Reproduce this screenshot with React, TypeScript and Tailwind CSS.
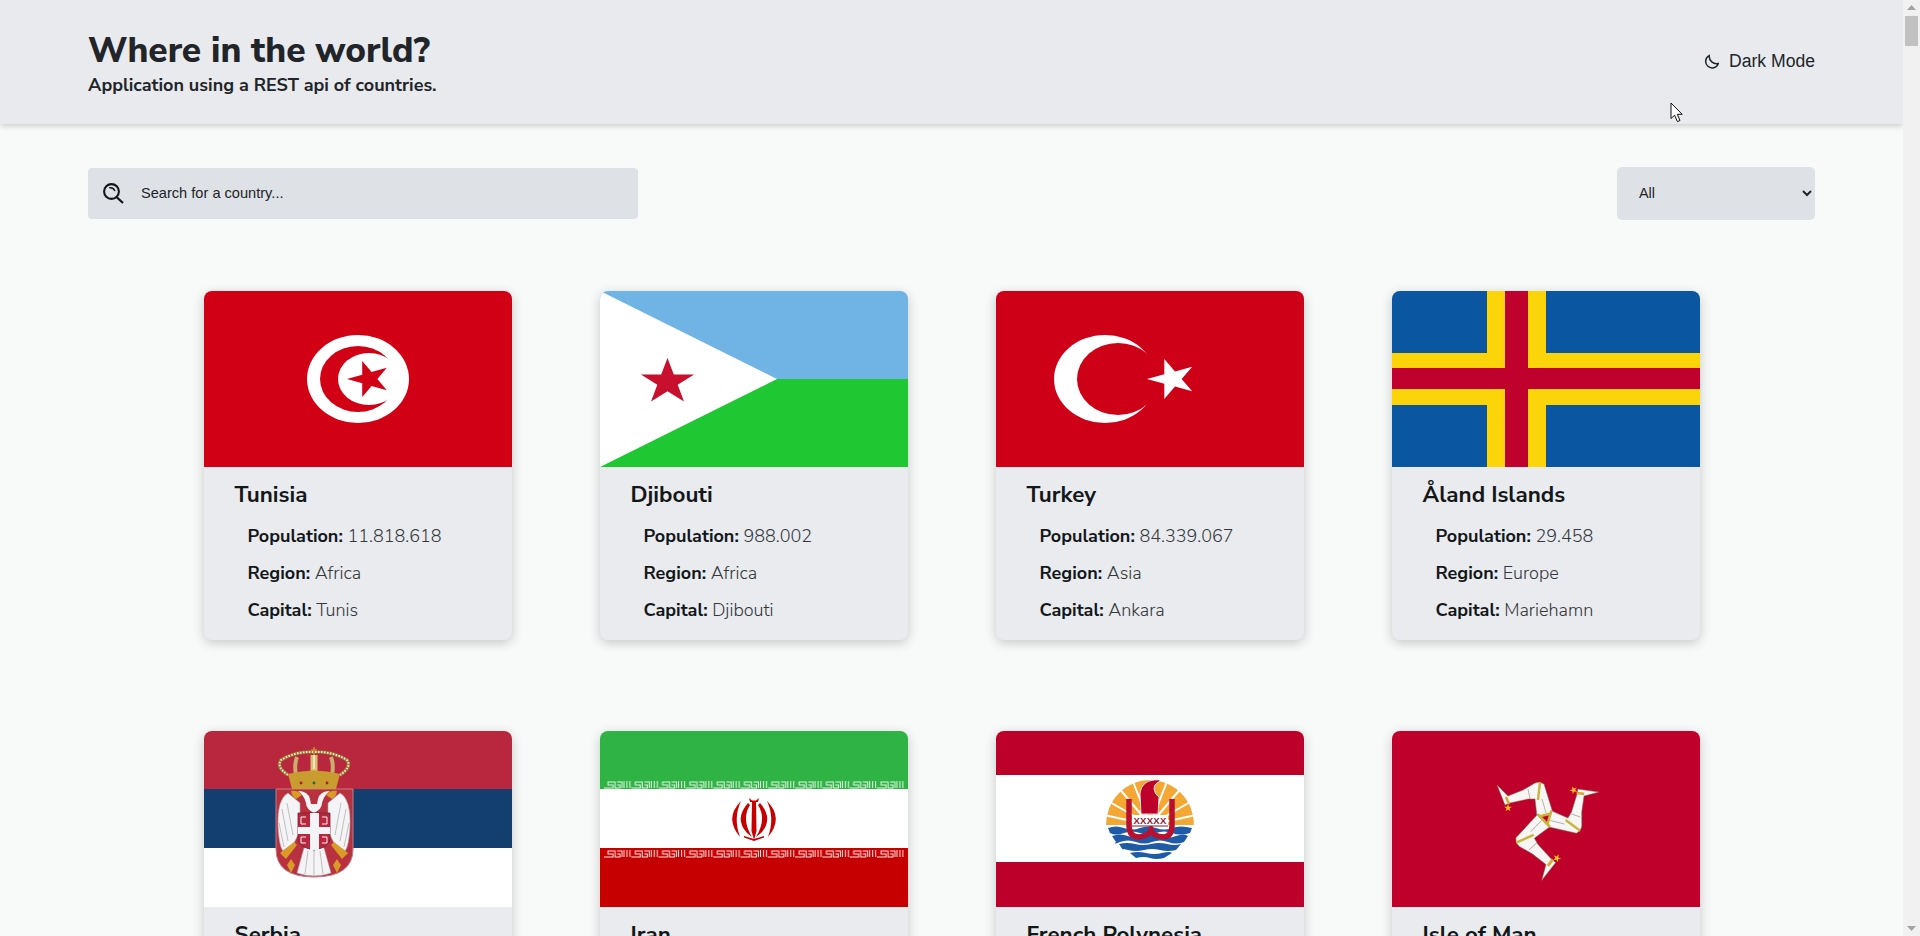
import React from 'react';

const headingFont = "font-['Nunito_Sans','Lato','Noto_Sans',sans-serif]";

const star = (cx: number, cy: number, rx: number, ry: number, start: number) => {
    const points: string[] = [];
    for (let i = 0; i < 10; i++) {
        const r = i % 2 === 0 ? 1 : 0.382;
        const a = ((start + i * 36) * Math.PI) / 180;
        points.push(`${(cx + rx * r * Math.cos(a)).toFixed(1)},${(cy + ry * r * Math.sin(a)).toFixed(1)}`);
    }
    return points.join(' ');
};

const FlagSvg: React.FC<{ children: React.ReactNode }> = ({ children }) => (
    <svg viewBox="0 0 308 176" className="block w-full h-[176px]" preserveAspectRatio="none">
        {children}
    </svg>
);

const Tunisia = () => (
    <FlagSvg>
        <rect width="308" height="176" fill="#d20014" />
        <ellipse cx="154" cy="88" rx="51" ry="44" fill="#fff" />
        <ellipse cx="154" cy="88" rx="38" ry="33" fill="#d20014" />
        <ellipse cx="165" cy="88" rx="31" ry="26" fill="#fff" />
        <polygon points={star(165, 88, 22, 19, 180)} fill="#d20014" />
    </FlagSvg>
);

const Djibouti = () => (
    <FlagSvg>
        <rect width="308" height="88" fill="#6fb4e4" />
        <rect y="88" width="308" height="88" fill="#1fc832" />
        <polygon points="0,0 177,88 0,176" fill="#fff" />
        <polygon points={star(67.5, 91, 28, 24, -90)} fill="#c8102e" />
    </FlagSvg>
);

const Turkey = () => (
    <FlagSvg>
        <rect width="308" height="176" fill="#ce0018" />
        <ellipse cx="109" cy="88" rx="51" ry="44" fill="#fff" />
        <ellipse cx="122" cy="88" rx="41" ry="36" fill="#ce0018" />
        <polygon points={star(176, 88, 25, 21, 180)} fill="#fff" />
    </FlagSvg>
);

const Aland = () => (
    <FlagSvg>
        <rect width="308" height="176" fill="#0a56a0" />
        <rect x="95" width="59" height="176" fill="#fbd40a" />
        <rect y="62" width="308" height="52" fill="#fbd40a" />
        <rect x="113" width="23" height="176" fill="#c0002d" />
        <rect y="77" width="308" height="21" fill="#c0002d" />
    </FlagSvg>
);

const Serbia = () => (
    <FlagSvg>
        <rect width="308" height="59" fill="#b9273e" />
        <rect y="58" width="308" height="59" fill="#133f70" />
        <rect y="117" width="308" height="59" fill="#fff" />
        <path d="M72 58H149V118Q149 146 110 146Q72 146 72 118Z" fill="#b9303f" stroke="#c77a86" strokeWidth="1" />
        {/* crown */}
        <path d="M84 44Q72 36 77 29Q92 20 110 21Q128 20 143 29Q148 36 136 44" fill="none" stroke="#9a7a35" strokeWidth="3.4" />
        <path d="M84 44Q72 36 77 29Q92 20 110 21Q128 20 143 29Q148 36 136 44" fill="none" stroke="#f1e6c8" strokeWidth="2" strokeDasharray="1.6 1.4" />
        <path d="M92 44Q90 34 93 26M128 44Q130 34 127 26" fill="none" stroke="#c9ad6a" strokeWidth="4" />
        <rect x="106.5" y="24" width="7" height="20" fill="#d9c070" />
        <path d="M110 24V38" stroke="#f3ecd6" strokeWidth="1.6" />
        <path d="M110 16V24M107 19H113" stroke="#c9862c" strokeWidth="1.6" />
        <path d="M84 43Q110 36 136 43L132 58H88Z" fill="#c99c30" />
        <circle cx="97" cy="52" r="1.4" fill="#a81f30" />
        <circle cx="110" cy="52" r="1.4" fill="#1b6b3a" />
        <circle cx="123" cy="52" r="1.4" fill="#a81f30" />
        {/* eagle */}
        <path d="M84 62Q73 68 74 95Q75 115 79 120L90 112L96 100V72Z" fill="#f4f4f6" stroke="#a8a8ae" strokeWidth=".6" />
        <path d="M136 62Q147 68 146 95Q145 115 141 120L130 112L124 100V72Z" fill="#f4f4f6" stroke="#a8a8ae" strokeWidth=".6" />
        <path d="M78 78L84 110M83 72L89 104M75 92L80 116M142 78L136 110M137 72L131 104M145 92L140 116" stroke="#a8a8ae" strokeWidth=".7" />
        <path d="M94 60Q104 60 106 68L107 73H113L114 68Q116 60 126 60Q120 64 118 72Q118 78 110 82Q102 78 102 72Q100 64 94 60Z" fill="#f4f4f6" />
        <path d="M87 60Q94 59 98 64L92 68Q88 66 87 60ZM133 60Q126 59 122 64L128 68Q132 66 133 60Z" fill="#d99a28" />
        <path d="M100 117L110 114L120 117L127 142Q110 148 93 142Z" fill="#f4f4f6" stroke="#a8a8ae" strokeWidth=".6" />
        <path d="M104 120L101 143M110 118V145M116 120L119 143" stroke="#a8a8ae" strokeWidth=".7" />
        <path d="M76 122L90 111L93 114L82 128ZM144 122L130 111L127 114L138 128Z" fill="#d99a28" />
        <path d="M87 128L91 134L87 142L83 134ZM133 128L137 134L133 142L129 134Z" fill="#d99a28" />
        {/* inner shield */}
        <path d="M94 82H126V108Q126 116 110 119Q94 116 94 108Z" fill="#b9273e" stroke="#7b2233" strokeWidth=".8" />
        <path d="M106 82H115V96H126V103H115V119H106V103H94V96H106Z" fill="#f4f4f6" />
        <path d="M102 86H97V93H102M118 86H123V93H118M102 106H97V112H102M118 106H123V112H118" fill="none" stroke="#f4f4f6" strokeWidth="1" />
    </FlagSvg>
);

// one unit of the kufic strip along the Iranian stripes
const kufic = 'M0 8H9V5H4V2H11V8H16V5H13M13 2H18V8M20 8V1M23 8V1M26 8V1';

const Iran = () => (
    <FlagSvg>
        <defs>
            <pattern id="kuficGreen" x="4" y="49" width="27.3" height="9" patternUnits="userSpaceOnUse">
                <path d={kufic} fill="none" stroke="#e2f6e5" strokeWidth="1" />
            </pattern>
            <pattern id="kuficRed" x="4" y="118" width="27.3" height="9" patternUnits="userSpaceOnUse">
                <path d={kufic} fill="none" stroke="#fbe3e3" strokeWidth="1" />
            </pattern>
        </defs>
        <rect width="308" height="59" fill="#2fb344" />
        <rect y="58" width="308" height="59" fill="#fff" />
        <rect y="117" width="308" height="59" fill="#c60000" />
        <rect x="4" y="49" width="300" height="9" fill="url(#kuficGreen)" />
        <rect x="4" y="118" width="300" height="9" fill="url(#kuficRed)" />
        <g fill="#c60000">
            <path d="M152 71H156L156.5 100L154 109L151.5 100Z" />
            <path d="M149 67L152 69.5H156L159 67L158 71H150Z" />
            <path d="M148 72Q134 88 147 102L152 106Q141 88 150 74Z" />
            <path d="M160 72Q174 88 161 102L156 106Q167 88 158 74Z" />
            <path d="M141 70Q124 87 140 106Q133 87 141 70Z" />
            <path d="M167 70Q184 87 168 106Q175 87 167 70Z" />
            <path d="M144 105L154 108L164 105L164 106.5L154 110L144 106.5Z" />
        </g>
    </FlagSvg>
);

const FrenchPolynesia = () => (
    <FlagSvg>
        <rect width="308" height="45" fill="#bc0029" />
        <rect y="44" width="308" height="88" fill="#fff" />
        <rect y="131" width="308" height="45" fill="#bc0029" />
        {/* sun */}
        <path d="M110 94A44 45 0 0 1 198 94Z" fill="#f5a733" />
        <path d="M154 94L136 48M154 94L122 56M154 94L112 70M154 94L108 84M154 94L172 48M154 94L186 56M154 94L196 70M154 94L200 84" stroke="#fff" strokeWidth="2" />
        {/* sea */}
        <g fill="#1f5aa6">
            <path d="M112 97Q120 94 128 97T144 97T160 97T176 97T196 97L194 102Q184 105 176 102T160 102T144 102T128 102T114 102Z" />
            <path d="M116 105Q124 102 132 105T148 105T164 105T180 105T192 105L188 111Q180 114 172 111T156 111T140 111T124 111T120 111Z" />
            <path d="M123 113Q131 111 139 113T155 113T171 113T185 113L180 119Q172 121 164 119T148 119T132 119T127 119Z" />
            <path d="M134 122Q142 120 150 122T166 122T176 122L168 127Q160 129 154 127T140 127Z" />
        </g>
        {/* canoe */}
        <path d="M133 68V94Q133 106 143 106Q153 105 155 99Q157 105 167 106Q176 106 176 94V68" fill="none" stroke="#b8102e" strokeWidth="5.5" />
        <path d="M144 62Q146 50 158 49Q163 48 165 50Q158 52 158 58Q159 64 163 66L162 83H145Z" fill="#bc0029" stroke="#fff" strokeWidth=".8" />
        <rect x="136" y="84" width="36" height="11" fill="#fff" />
        <text x="154" y="93" textAnchor="middle" fontSize="9.5" fontWeight="700" fontFamily="Liberation Sans, sans-serif" fill="#8e1a33" letterSpacing="0.3">XXXXX</text>
        <path d="M136 95H172" stroke="#8e1a33" strokeWidth="1" />
    </FlagSvg>
);

const IsleOfMan = () => {
    const leg = (
        <g>
            <path d="M145 86L161 82L152 53Q147 50 143 52L131 59L116 65L105 54L113 74L118 72L136 68L143 68Z" fill="#f8f6f4" stroke="#77664f" strokeWidth=".5" />
            <path d="M148 51L146 69" stroke="#c9b43c" strokeWidth="2.4" />
            <path d="M145 86L161 82" stroke="#c9b43c" strokeWidth="2.6" />
            <path d="M114 66L117 73" stroke="#d8a93a" strokeWidth="2.6" />
            <path d="M136 58L138 68" stroke="#9a9a8e" strokeWidth=".7" />
            <path d="M150 68L154 82" stroke="#9a9a8e" strokeWidth=".7" />
            <polygon points={star(116, 77, 4, 4, -90)} fill="#f6c21c" />
        </g>
    );
    return (
        <FlagSvg>
            <rect width="308" height="176" fill="#bf002b" />
            {leg}
            <g transform="rotate(120 154 87)">{leg}</g>
            <g transform="translate(154 87) rotate(240) scale(1.06) translate(-154 -87)">{leg}</g>
        </FlagSvg>
    );
};

const countries = [
    { name: 'Tunisia', population: '11.818.618', region: 'Africa', capital: 'Tunis', Flag: Tunisia },
    { name: 'Djibouti', population: '988.002', region: 'Africa', capital: 'Djibouti', Flag: Djibouti },
    { name: 'Turkey', population: '84.339.067', region: 'Asia', capital: 'Ankara', Flag: Turkey },
    { name: 'Åland Islands', population: '29.458', region: 'Europe', capital: 'Mariehamn', Flag: Aland },
    { name: 'Serbia', population: '6.908.224', region: 'Europe', capital: 'Belgrade', Flag: Serbia },
    { name: 'Iran', population: '83.992.953', region: 'Asia', capital: 'Tehran', Flag: Iran },
    { name: 'French Polynesia', population: '280.904', region: 'Oceania', capital: 'Papeetē', Flag: FrenchPolynesia },
    { name: 'Isle of Man', population: '85.032', region: 'Europe', capital: 'Douglas', Flag: IsleOfMan },
];

const Stat: React.FC<{ label: string; value: string }> = ({ label, value }) => (
    <p className="h-[37px] leading-[37px] text-[18px] text-[#34383c] font-light">
        <span className="font-bold text-[#14171a]">{label}:</span> {value}
    </p>
);

const CountryCard: React.FC<(typeof countries)[number]> = ({ name, population, region, capital, Flag }) => (
    <div className="w-[308px] h-[349px] rounded-lg overflow-hidden bg-[#e9ebee] shadow-[0_3px_12px_rgba(0,0,0,0.2)]">
        <Flag />
        <div className="pl-[31px] pt-[14px]">
            <h2 className="text-[22.4px] leading-[28px] font-bold text-[#14171a] mb-[9px]">{name}</h2>
            <div className="pl-[13px]">
                <Stat label="Population" value={population} />
                <Stat label="Region" value={region} />
                <Stat label="Capital" value={capital} />
            </div>
        </div>
    </div>
);

const ScrollArrow: React.FC<{ down?: boolean }> = ({ down }) => (
    <div className="h-[16px] flex items-center justify-center">
        <svg width="9" height="6" viewBox="0 0 9 6" className={down ? 'rotate-180' : ''}>
            <polygon points="4.5,0 9,5 0,5" fill="#a3a3a3" />
        </svg>
    </div>
);

export default function App() {
    return (
        <div className={`relative flex h-[936px] w-full overflow-hidden bg-[#f8fafa] text-[#212529] ${headingFont}`}>
            <div className="flex-1 min-w-0 overflow-hidden">
                <header className="h-[124px] bg-[#e9eaee] px-[88px] flex items-center justify-between shadow-[0_2px_6px_rgba(0,0,0,0.18)] relative">
                    <div className="-mt-[1px]">
                        <h1 className="text-[35.2px] leading-[46px] font-extrabold">Where in the world?</h1>
                        <p className="text-[18px] leading-[24px] font-bold">Application using a REST api of countries.</p>
                    </div>
                    <button className="-mt-[2px] flex items-center gap-[10px] text-[17.6px] text-[#212529] font-['Liberation_Sans',Arial,sans-serif]">
                        <svg width="16" height="16" viewBox="0 0 16 16" fill="none" stroke="#212529" strokeWidth="1.5">
                            <path d="M6.2 2.6A6.5 6.5 0 1 0 15.3 10.5A7.5 7.5 0 0 1 6.2 2.6Z" />
                        </svg>
                        Dark Mode
                    </button>
                </header>

                <div className="px-[88px] pt-[43px] flex items-center justify-between">
                    <label className="w-[550px] h-[51px] bg-[#dee2e6] rounded-[4px] flex items-center pl-[15px] gap-[16px]">
                        <svg width="22" height="22" viewBox="0 0 22 22" fill="none" stroke="#14171a" strokeWidth="2.1">
                            <circle cx="8.5" cy="8.5" r="7.4" />
                            <path d="M13.5 14L20 20" strokeWidth="2.3" />
                            <path d="M6.2 4.8Q10.5 4 12 8" strokeWidth="1.5" />
                        </svg>
                        <input
                            type="text"
                            placeholder="Search for a country..."
                            className="flex-1 bg-transparent outline-none text-[14.6px] placeholder:text-[#212529] font-['Liberation_Sans',Arial,sans-serif]"
                        />
                    </label>
                    <select className="w-[198px] h-[53px] bg-[#dee2e6] rounded-[5px] pl-[18px] pr-[4px] pb-[2px] text-[14.4px] outline-none font-['Liberation_Sans',Arial,sans-serif]">
                        <option>All</option>
                        <option>Africa</option>
                        <option>Americas</option>
                        <option>Asia</option>
                        <option>Europe</option>
                        <option>Oceania</option>
                    </select>
                </div>

                <div className="mt-[71px] grid grid-cols-[repeat(4,308px)] justify-center gap-x-[88px] gap-y-[91px]">
                    {countries.map((country) => (
                        <CountryCard key={country.name} {...country} />
                    ))}
                </div>
            </div>

            <div className="w-[17px] shrink-0 bg-[#f1f1f1] flex flex-col justify-between">
                <div>
                    <ScrollArrow />
                    <div className="mx-[2px] h-[30px] bg-[#c1c1c1]" />
                </div>
                <ScrollArrow down />
            </div>

            {/* mouse pointer caught in the screenshot */}
            <svg width="14" height="21" viewBox="0 0 14 21" className="absolute left-[1670px] top-[102px]">
                <path d="M1 1V16.5L4.6 13.2L7.4 19.6L10 18.5L7.3 12.3H12.2Z" fill="#fff" stroke="#111" strokeWidth="1" />
            </svg>
        </div>
    );
}
